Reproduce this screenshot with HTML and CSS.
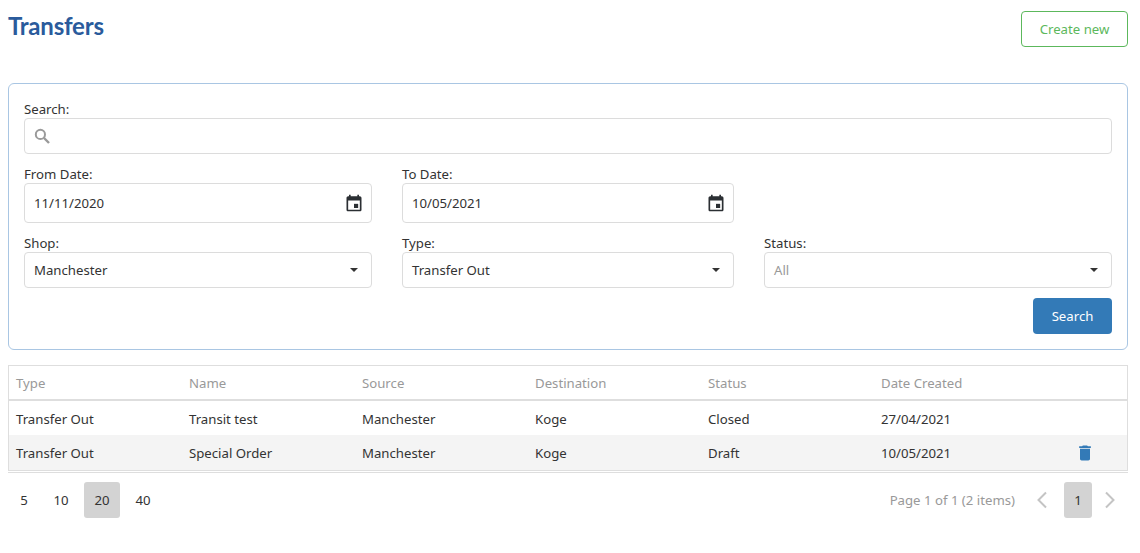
FILE: index.html
```html
<!DOCTYPE html>
<html lang="en">
<head>
<meta charset="utf-8">
<title>Transfers</title>
<link rel="stylesheet" href="styles.css">
</head>
<body>
<header class="page-head">
  <h1 class="title">Transfers</h1>
  <button class="btn-create" type="button">Create new</button>
</header>

<section class="filters">
  <div class="field field-search">
    <label class="label">Search:</label>
    <div class="input input-search">
      <svg class="icon-search" viewBox="0 0 16 16" width="16" height="16" aria-hidden="true"><circle cx="6.4" cy="6.4" r="4.6" fill="none" stroke="#9a9a9a" stroke-width="2"/><path d="M10 10l5 5" stroke="#9a9a9a" stroke-width="2.400" fill="none"/></svg>
    </div>
  </div>
  <div class="filter-grid">
    <div class="field">
      <label class="label">From Date:</label>
      <div class="input input-date"><span>11/11/2020</span>
        <svg class="icon-cal" viewBox="0 0 24 24" width="20" height="20" aria-hidden="true"><path fill="#2b2f33" d="M19 4h-1V2h-2v2H8V2H6v2H5C3.9 4 3 4.9 3 6v14c0 1.100.9 2 2 2h14c1.100 0 2-.9 2-2V6c0-1.100-.9-2-2-2zm0 16H5V9h14v11z"/><path fill="#2b2f33" d="M12 13h5v5h-5z"/></svg>
      </div>
    </div>
    <div class="field">
      <label class="label">To Date:</label>
      <div class="input input-date"><span>10/05/2021</span>
        <svg class="icon-cal" viewBox="0 0 24 24" width="20" height="20" aria-hidden="true"><path fill="#2b2f33" d="M19 4h-1V2h-2v2H8V2H6v2H5C3.9 4 3 4.9 3 6v14c0 1.100.9 2 2 2h14c1.100 0 2-.9 2-2V6c0-1.100-.9-2-2-2zm0 16H5V9h14v11z"/><path fill="#2b2f33" d="M12 13h5v5h-5z"/></svg>
      </div>
    </div>
    <div></div>
    <div class="field">
      <label class="label">Shop:</label>
      <div class="input input-select"><span>Manchester</span><i class="caret"></i></div>
    </div>
    <div class="field">
      <label class="label">Type:</label>
      <div class="input input-select"><span>Transfer Out</span><i class="caret"></i></div>
    </div>
    <div class="field">
      <label class="label">Status:</label>
      <div class="input input-select"><span class="placeholder">All</span><i class="caret"></i></div>
    </div>
  </div>
  <div class="filter-actions"><button class="btn-search" type="button">Search</button></div>
</section>

<div class="table-wrap">
  <table class="grid">
    <colgroup><col class="c1"><col class="c1"><col class="c1"><col class="c1"><col class="c1"><col class="c1"><col></colgroup>
    <thead>
      <tr><th>Type</th><th>Name</th><th>Source</th><th>Destination</th><th>Status</th><th>Date Created</th><th></th></tr>
    </thead>
    <tbody>
      <tr><td>Transfer Out</td><td>Transit test</td><td>Manchester</td><td>Koge</td><td>Closed</td><td>27/04/2021</td><td></td></tr>
      <tr class="alt"><td>Transfer Out</td><td>Special Order</td><td>Manchester</td><td>Koge</td><td>Draft</td><td>10/05/2021</td><td class="cell-action"><svg viewBox="0 0 24 24" width="20" height="20" aria-hidden="true"><path fill="#337ab7" d="M6 19c0 1.100.9 2 2 2h8c1.100 0 2-.9 2-2V7H6v12zM19 4h-3.500l-1-1h-5l-1 1H5v2h14V4z"/></svg></td></tr>
    </tbody>
  </table>
</div>

<footer class="pager">
  <div class="sizes">
    <span class="size size-first">5</span><span class="size">10</span><span class="size active">20</span><span class="size">40</span>
  </div>
  <div class="pages">
    <span class="info">Page 1 of 1 (2 items)</span>
    <svg class="chev" viewBox="0 0 12 20" width="12" height="20" aria-hidden="true"><path d="M10 2.500L2.500 10l7.500 7.500" fill="none" stroke="#c4c4c4" stroke-width="2"/></svg>
    <span class="page active">1</span>
    <svg class="chev" viewBox="0 0 12 20" width="12" height="20" aria-hidden="true"><path d="M2 2.500L9.500 10 2 17.500" fill="none" stroke="#c4c4c4" stroke-width="2"/></svg>
  </div>
</footer>
</body>
</html>
```
FILE: styles.css
```css
* { box-sizing: border-box; }
html, body { height: 100%; }
body {
  margin: 0;
  padding: 0 12px 0 8px;
  background: #fff;
  color: #333;
  font: 13.2px/20px "Noto Sans", "Open Sans", sans-serif;
  overflow: hidden;
}
.page-head {
  display: flex;
  justify-content: space-between;
  align-items: flex-start;
  height: 83px;
  padding-top: 11px;
}
.title {
  margin: 0;
  font: 700 24px/30px Lato, sans-serif;
  color: #2a5b9c;
  letter-spacing: -0.2px;
}
.btn-create {
  width: 107px;
  height: 36px;
  background: #fff;
  border: 1px solid #5cb85c;
  border-radius: 4px;
  color: #5cb85c;
  font: inherit;
}
.filters {
  height: 267px;
  border: 1px solid #a9c6e3;
  border-radius: 6px;
  padding: 16px 15px 0;
}
.label { display: block; height: 18px; line-height: 18px; }
.field-search { margin-bottom: 11px; }
.input {
  display: flex;
  align-items: center;
  justify-content: space-between;
  border: 1px solid #dcdcdc;
  border-radius: 4px;
  padding: 0 9px;
  background: #fff;
}
.input-search { height: 36px; }
.input-date { height: 40px; }
.input-select { height: 36px; }
.filter-grid {
  display: grid;
  grid-template-columns: 348px 332px 348px;
  column-gap: 30px;
  row-gap: 11px;
}
.icon-cal { margin-right: -2px; }
.caret {
  width: 0;
  height: 0;
  border-left: 4.500px solid transparent;
  border-right: 4.500px solid transparent;
  border-top: 4.500px solid #333;
  margin-right: 4px;
}
.placeholder { color: #999; }
.filter-actions { display: flex; justify-content: flex-end; margin-top: 10px; }
.btn-search {
  width: 79px;
  height: 36px;
  border: 0;
  border-radius: 4px;
  background: #337ab7;
  color: #fff;
  font: inherit;
}
.table-wrap {
  margin-top: 15px;
  height: 106px;
  border: 1px solid #dedede;
  border-bottom: 0;
}
.grid { width: 100%; border-collapse: separate; border-spacing: 0; table-layout: fixed; }
.c1 { width: 173px; }
.grid th {
  height: 35px;
  padding: 0 7px;
  text-align: left;
  font-weight: 400;
  color: #999;
  border-bottom: 2px solid #dedede;
}
.grid td { height: 34px; padding: 1px 7px 0; }
.grid .alt td { height: 36px; padding: 0 7px; background: #f4f4f4; border-bottom: 1px solid #dedede; }
.grid .alt .cell-action { text-align: right; padding: 0 32px 0 0; line-height: 0; }
.pager {
  display: flex;
  justify-content: space-between;
  align-items: center;
  border-top: 1px solid #dedede;
  margin-top: 1px;
  padding-top: 9px;
}
.sizes { display: flex; gap: 5px; }
.size { width: 36px; height: 36px; line-height: 36px; text-align: center; border-radius: 3px; }
.size-first { width: 30px; padding-left: 2px; }
.size.active { background: #d3d3d3; }
.pages { display: flex; align-items: center; margin-right: 12px; }
.info { color: #999; margin-right: 21px; }
.chev { display: block; }
.page { width: 28px; height: 36px; line-height: 36px; text-align: center; border-radius: 3px; margin: 0 12px 0 16px; }
.page.active { background: #d3d3d3; }
```
